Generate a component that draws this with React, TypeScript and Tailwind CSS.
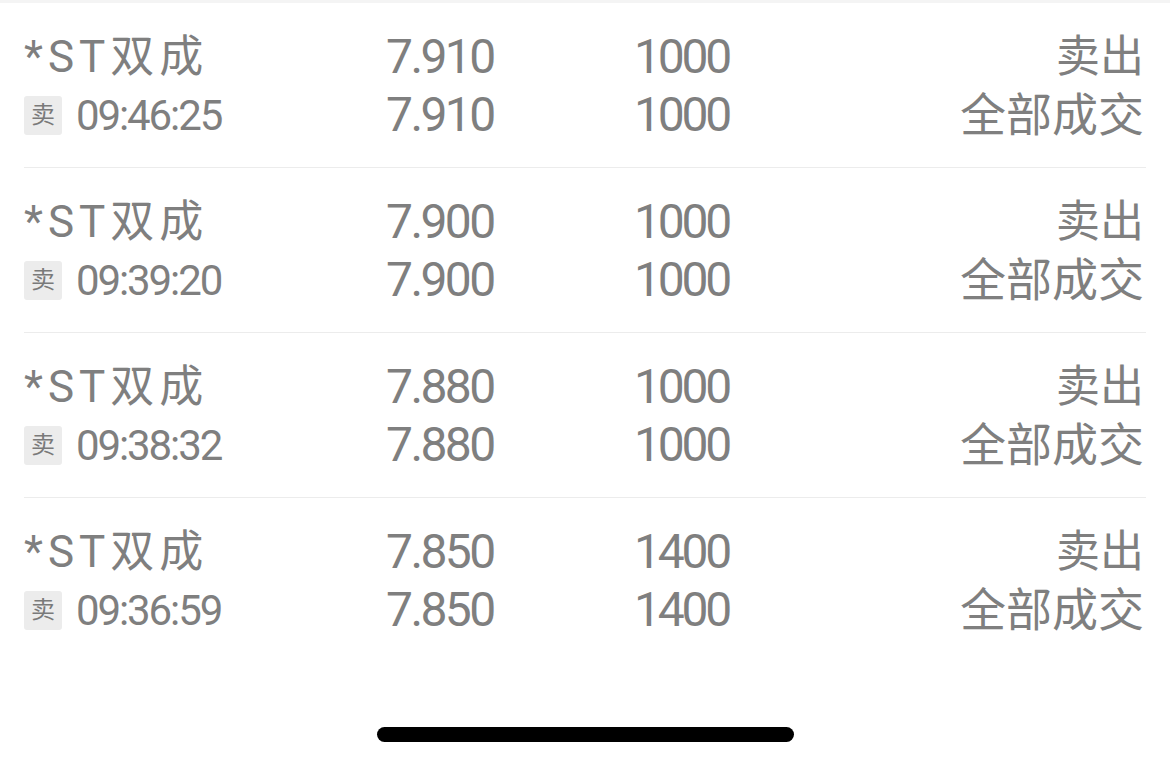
const rows = [
  { name: '*ST双成', side: '卖', time: '09:46:25', price: '7.910', qty: '1000', action: '卖出', status: '全部成交' },
  { name: '*ST双成', side: '卖', time: '09:39:20', price: '7.900', qty: '1000', action: '卖出', status: '全部成交' },
  { name: '*ST双成', side: '卖', time: '09:38:32', price: '7.880', qty: '1000', action: '卖出', status: '全部成交' },
  { name: '*ST双成', side: '卖', time: '09:36:59', price: '7.850', qty: '1400', action: '卖出', status: '全部成交' },
]

const font = "font-['Roboto','Noto_Sans_CJK_SC',sans-serif]"

export default function App() {
  return (
    <div className={`w-[1170px] h-[766px] bg-white flex flex-col text-[#7f7f7f] ${font}`}>
      <div className="h-[3px] bg-[#f4f4f4]" />

      {/* Order list */}
      <div className="px-6">
        {rows.map((r, i) => (
          <div
            key={i}
            className={`grid grid-cols-[362px_248px_1fr_auto] pt-[25px] pb-[23px] ${i < rows.length - 1 ? 'border-b border-[#ececec]' : ''}`}
          >
            <div className="h-[58px] flex items-center text-[44px] tracking-[5px]">{r.name}</div>
            <div className="h-[58px] flex items-center text-[48px] tracking-[-2.6px]">{r.price}</div>
            <div className="h-[58px] flex items-center text-[48px] tracking-[-3.2px]">{r.qty}</div>
            <div className="h-[58px] flex items-center justify-end text-[44px] pr-[2px]">{r.action}</div>

            <div className="h-[58px] flex items-center gap-[14px]">
              <span className="w-[38px] h-[39px] rounded-[3px] bg-[#ececec] flex items-center justify-center text-[24px] text-[#7a7a7a]">
                {r.side}
              </span>
              <span className="text-[42px] tracking-[-2.1px]">{r.time}</span>
            </div>
            <div className="h-[58px] flex items-center text-[48px] tracking-[-2.6px]">{r.price}</div>
            <div className="h-[58px] flex items-center text-[48px] tracking-[-3.2px]">{r.qty}</div>
            <div className="h-[58px] flex items-center justify-end text-[46px] pr-[2px]">{r.status}</div>
          </div>
        ))}
      </div>

      {/* Home indicator */}
      <div className="flex-1 flex items-end justify-center pb-[24px]">
        <div className="w-[417px] h-[15px] rounded-full bg-black" />
      </div>
    </div>
  )
}
